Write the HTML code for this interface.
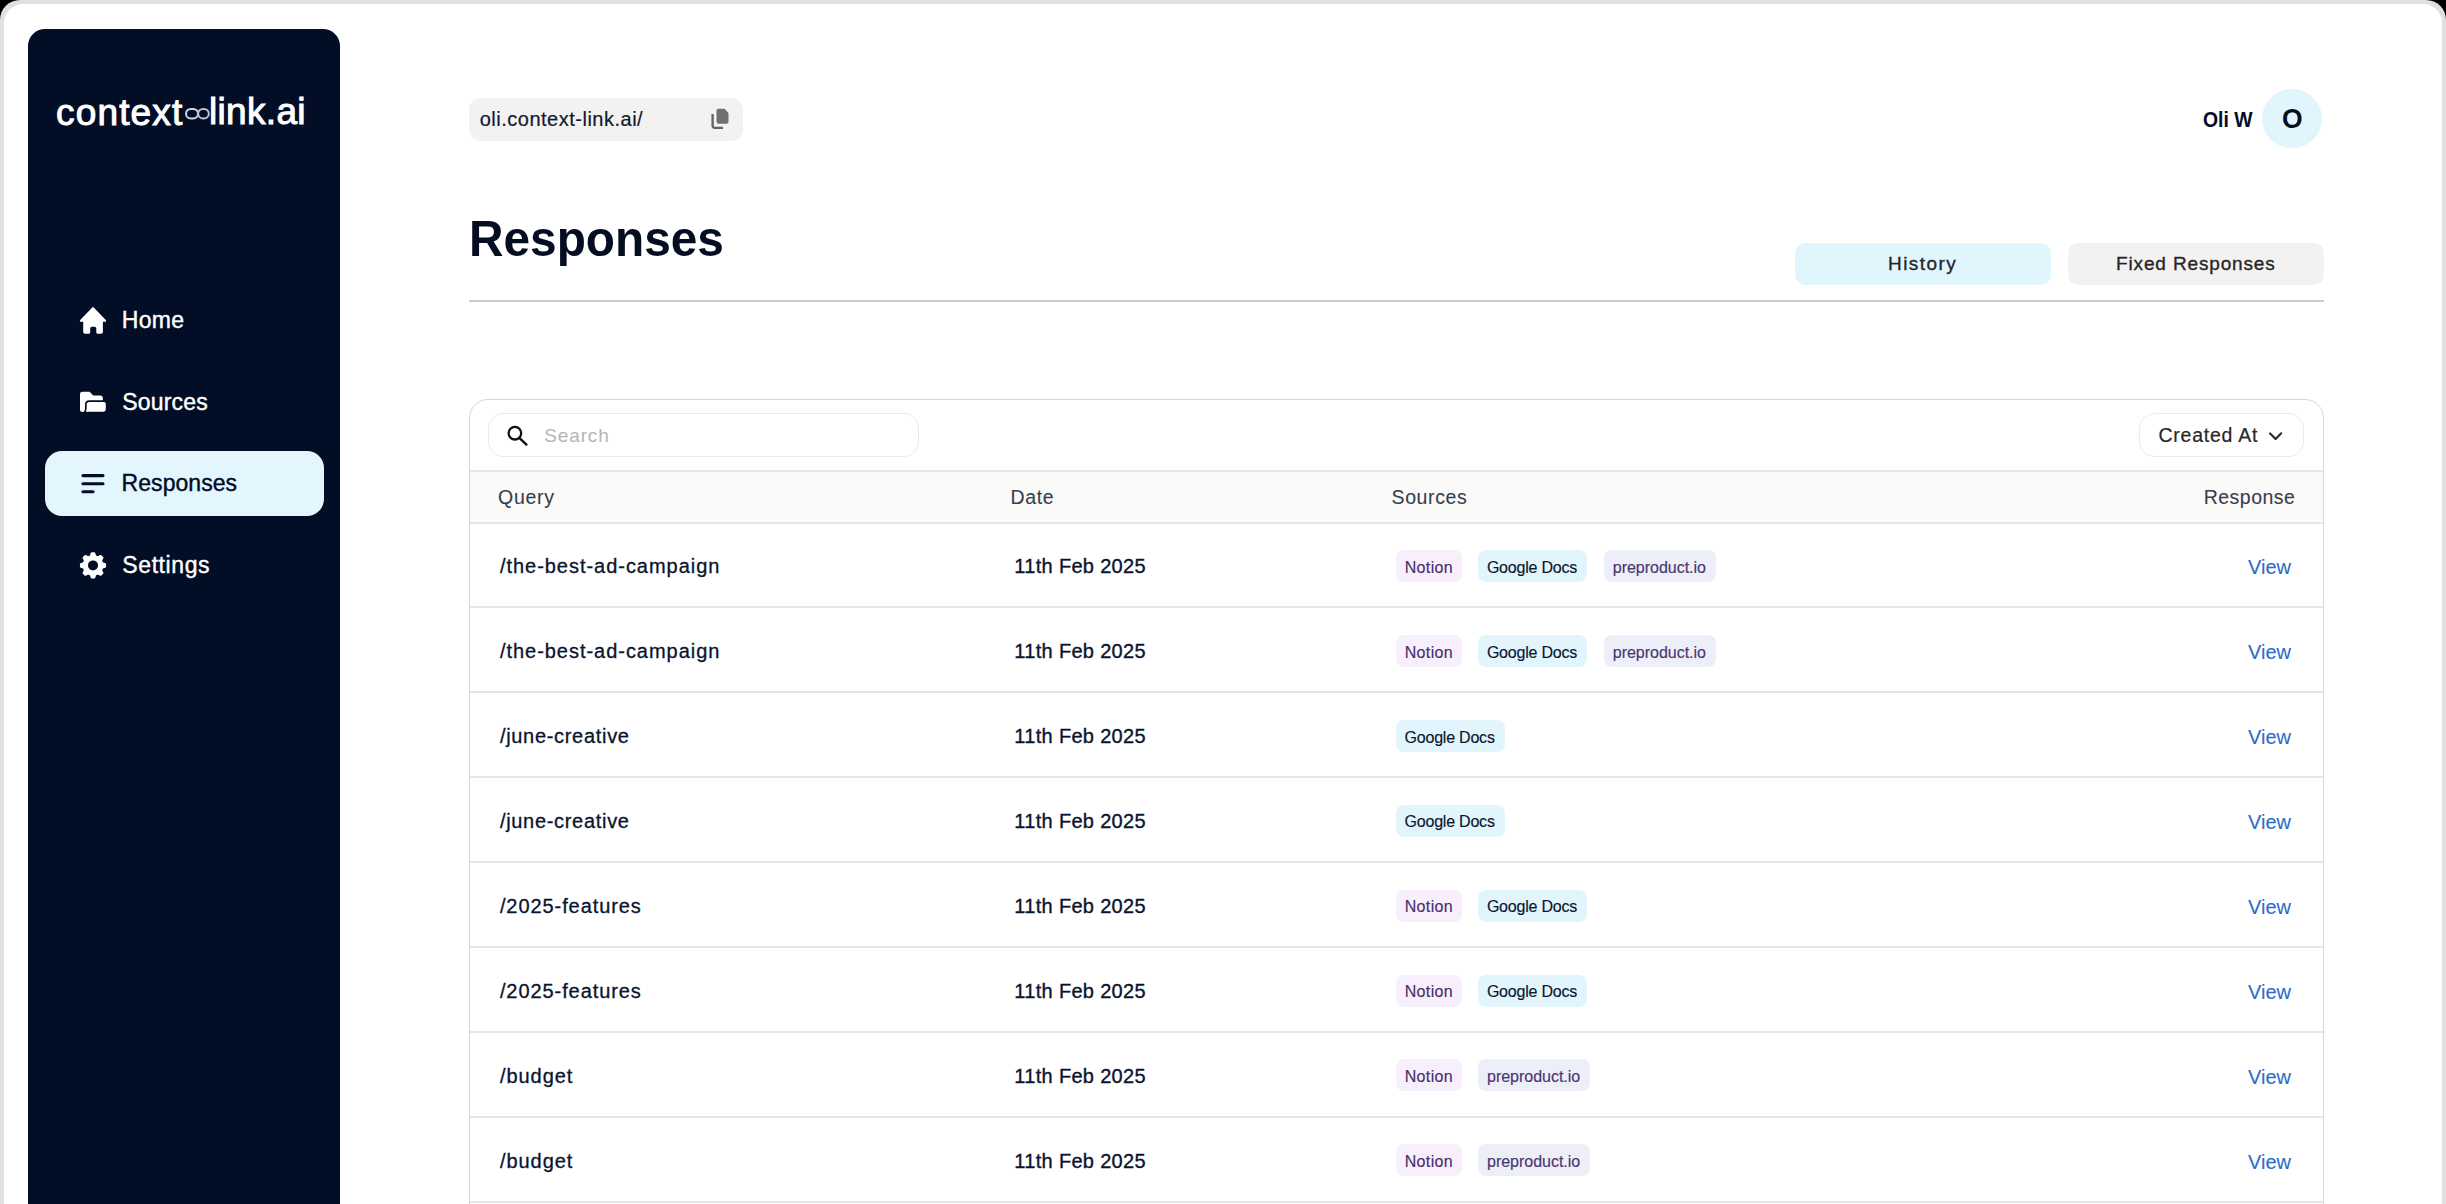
<!DOCTYPE html>
<html><head><meta charset="utf-8"><title>Responses - context-link.ai</title>
<style>
html,body{margin:0;padding:0;}
body{width:2446px;height:1204px;overflow:hidden;background:#000;position:relative;font-family:"Liberation Sans",sans-serif;}
.t{position:absolute;white-space:nowrap;font-family:"Liberation Sans",sans-serif;}
.abs{position:absolute;}
</style></head><body>
<div class="abs" style="left:0;top:0;width:2446px;height:1300px;background:#e0e0de;border-radius:20px 20px 0 0;"></div>
<div class="abs" style="left:4px;top:4px;width:2438px;height:1300px;background:#fff;border-radius:19px 19px 0 0;"></div>

<div class="abs" style="left:28px;top:29px;width:311.5px;height:1300px;background:#020d26;border-radius:17px;"></div>
<div class="t" style="left:56.00px;top:93.50px;font-size:37px;line-height:37px;font-weight:400;letter-spacing:1.167px;color:#ffffff;-webkit-text-stroke:1.0px #ffffff;">context</div>
<div class="t" style="left:209.00px;top:93.40px;font-size:37px;line-height:37px;font-weight:400;letter-spacing:0.333px;color:#ffffff;-webkit-text-stroke:1.0px #ffffff;">link.ai</div>
<svg class="abs" style="left:180px;top:100px" width="34" height="26" viewBox="180 100 34 26">
<rect x="186" y="108.9" width="12" height="9.6" rx="4.8" ry="4.8" fill="none" stroke="#cfd8e6" stroke-width="2"/>
<rect x="198.2" y="108.9" width="10.6" height="9.6" rx="4.8" ry="4.8" fill="none" stroke="#c6bfc4" stroke-width="2"/>
</svg>
<div class="abs" style="left:45px;top:451px;width:278.5px;height:65px;background:#e3f6fd;border-radius:17px;"></div>
<svg class="abs" style="left:76px;top:302px" width="34" height="36" viewBox="0 0 34 36">
<path fill="#fff" d="M17,4.7 L29.8,17.9 Q30.8,19.7 28.9,19.7 L26.9,19.7 L26.9,30 Q26.9,31.8 25,31.8 L21.9,31.8 Q20.3,31.8 20.3,30.2 L20.3,26.6 Q20.3,24.8 18.5,24.8 L16,24.8 Q14.2,24.8 14.2,26.6 L14.2,30.2 Q14.2,31.8 12.6,31.8 L9.1,31.8 Q7.2,31.8 7.2,30 L7.2,19.7 L5.1,19.7 Q3.2,19.7 4.2,17.9 Z"/>
</svg>
<svg class="abs" style="left:76px;top:386px" width="34" height="32" viewBox="0 0 34 32">
<path fill="#fff" d="M4,8.2 Q4,5.85 6.4,5.85 L13.6,5.85 L17.2,9.6 L24,9.6 Q26.9,9.6 26.9,12.5 L26.9,16 L11,16 L9.5,24.2 Q9.2,26.1 6.6,26.1 Q4,26.1 4,23.6 Z"/>
<path fill="#fff" stroke="#020d26" stroke-width="1.7" d="M13.4,15.2 L28,15.2 Q30.6,15.2 30.6,17.8 L30.6,23.6 Q30.6,26.6 27.8,26.6 L8.2,26.6 Q9.6,25.2 9.8,23 L9.8,18.6 Q9.8,15.2 13.4,15.2 Z"/>
</svg>
<svg class="abs" style="left:76px;top:466px" width="34" height="34" viewBox="76 466 34 34">
<path stroke="#020d26" stroke-width="3.1" stroke-linecap="round" fill="none" d="M83,475.6 L103,475.6 M83,483.7 L103,483.7 M83,491.8 L93,491.8"/>
</svg>
<svg class="abs" style="left:76px;top:548px" width="34" height="36" viewBox="76 548 34 36">
<path fill="#fff" fill-rule="evenodd" d="M93.00,552.30 L93.23,552.30 L93.46,552.31 L93.69,552.32 L93.91,552.33 L94.14,552.35 L94.37,552.37 L94.60,552.40 L94.81,552.50 L95.01,552.69 L95.19,552.96 L95.35,553.29 L95.49,553.67 L95.62,554.06 L95.73,554.45 L95.83,554.82 L95.94,555.14 L96.06,555.39 L96.19,555.57 L96.35,555.66 L96.52,555.72 L96.69,555.78 L96.86,555.85 L97.02,555.92 L97.19,555.99 L97.35,556.07 L97.52,556.14 L97.69,556.19 L97.91,556.16 L98.18,556.06 L98.48,555.91 L98.81,555.73 L99.17,555.53 L99.53,555.34 L99.90,555.17 L100.25,555.05 L100.56,554.99 L100.84,555.00 L101.06,555.08 L101.24,555.22 L101.42,555.36 L101.59,555.51 L101.77,555.66 L101.93,555.82 L102.10,555.98 L102.26,556.14 L102.42,556.30 L102.58,556.47 L102.74,556.63 L102.89,556.81 L103.04,556.98 L103.18,557.16 L103.32,557.34 L103.40,557.56 L103.41,557.84 L103.35,558.15 L103.23,558.50 L103.06,558.87 L102.87,559.23 L102.67,559.59 L102.49,559.92 L102.34,560.22 L102.24,560.49 L102.21,560.71 L102.26,560.88 L102.33,561.05 L102.41,561.21 L102.48,561.38 L102.55,561.54 L102.62,561.71 L102.68,561.88 L102.74,562.05 L102.83,562.21 L103.01,562.34 L103.26,562.46 L103.58,562.57 L103.95,562.67 L104.34,562.78 L104.73,562.91 L105.11,563.05 L105.44,563.21 L105.71,563.39 L105.90,563.59 L106.00,563.80 L106.03,564.03 L106.05,564.26 L106.07,564.49 L106.08,564.71 L106.09,564.94 L106.10,565.17 L106.10,565.40 L106.10,565.63 L106.09,565.86 L106.08,566.09 L106.07,566.31 L106.05,566.54 L106.03,566.77 L106.00,567.00 L105.90,567.21 L105.71,567.41 L105.44,567.59 L105.11,567.75 L104.73,567.89 L104.34,568.02 L103.95,568.13 L103.58,568.23 L103.26,568.34 L103.01,568.46 L102.83,568.59 L102.74,568.75 L102.68,568.92 L102.62,569.09 L102.55,569.26 L102.48,569.42 L102.41,569.59 L102.33,569.75 L102.26,569.92 L102.21,570.09 L102.24,570.31 L102.34,570.58 L102.49,570.88 L102.67,571.21 L102.87,571.57 L103.06,571.93 L103.23,572.30 L103.35,572.65 L103.41,572.96 L103.40,573.24 L103.32,573.46 L103.18,573.64 L103.04,573.82 L102.89,573.99 L102.74,574.17 L102.58,574.33 L102.42,574.50 L102.26,574.66 L102.10,574.82 L101.93,574.98 L101.77,575.14 L101.59,575.29 L101.42,575.44 L101.24,575.58 L101.06,575.72 L100.84,575.80 L100.56,575.81 L100.25,575.75 L99.90,575.63 L99.53,575.46 L99.17,575.27 L98.81,575.07 L98.48,574.89 L98.18,574.74 L97.91,574.64 L97.69,574.61 L97.52,574.66 L97.35,574.73 L97.19,574.81 L97.02,574.88 L96.86,574.95 L96.69,575.02 L96.52,575.08 L96.35,575.14 L96.19,575.23 L96.06,575.41 L95.94,575.66 L95.83,575.98 L95.73,576.35 L95.62,576.74 L95.49,577.13 L95.35,577.51 L95.19,577.84 L95.01,578.11 L94.81,578.30 L94.60,578.40 L94.37,578.43 L94.14,578.45 L93.91,578.47 L93.69,578.48 L93.46,578.49 L93.23,578.50 L93.00,578.50 L92.77,578.50 L92.54,578.49 L92.31,578.48 L92.09,578.47 L91.86,578.45 L91.63,578.43 L91.40,578.40 L91.19,578.30 L90.99,578.11 L90.81,577.84 L90.65,577.51 L90.51,577.13 L90.38,576.74 L90.27,576.35 L90.17,575.98 L90.06,575.66 L89.94,575.41 L89.81,575.23 L89.65,575.14 L89.48,575.08 L89.31,575.02 L89.14,574.95 L88.98,574.88 L88.81,574.81 L88.65,574.73 L88.48,574.66 L88.31,574.61 L88.09,574.64 L87.82,574.74 L87.52,574.89 L87.19,575.07 L86.83,575.27 L86.47,575.46 L86.10,575.63 L85.75,575.75 L85.44,575.81 L85.16,575.80 L84.94,575.72 L84.76,575.58 L84.58,575.44 L84.41,575.29 L84.23,575.14 L84.07,574.98 L83.90,574.82 L83.74,574.66 L83.58,574.50 L83.42,574.33 L83.26,574.17 L83.11,573.99 L82.96,573.82 L82.82,573.64 L82.68,573.46 L82.60,573.24 L82.59,572.96 L82.65,572.65 L82.77,572.30 L82.94,571.93 L83.13,571.57 L83.33,571.21 L83.51,570.88 L83.66,570.58 L83.76,570.31 L83.79,570.09 L83.74,569.92 L83.67,569.75 L83.59,569.59 L83.52,569.42 L83.45,569.26 L83.38,569.09 L83.32,568.92 L83.26,568.75 L83.17,568.59 L82.99,568.46 L82.74,568.34 L82.42,568.23 L82.05,568.13 L81.66,568.02 L81.27,567.89 L80.89,567.75 L80.56,567.59 L80.29,567.41 L80.10,567.21 L80.00,567.00 L79.97,566.77 L79.95,566.54 L79.93,566.31 L79.92,566.09 L79.91,565.86 L79.90,565.63 L79.90,565.40 L79.90,565.17 L79.91,564.94 L79.92,564.71 L79.93,564.49 L79.95,564.26 L79.97,564.03 L80.00,563.80 L80.10,563.59 L80.29,563.39 L80.56,563.21 L80.89,563.05 L81.27,562.91 L81.66,562.78 L82.05,562.67 L82.42,562.57 L82.74,562.46 L82.99,562.34 L83.17,562.21 L83.26,562.05 L83.32,561.88 L83.38,561.71 L83.45,561.54 L83.52,561.38 L83.59,561.21 L83.67,561.05 L83.74,560.88 L83.79,560.71 L83.76,560.49 L83.66,560.22 L83.51,559.92 L83.33,559.59 L83.13,559.23 L82.94,558.87 L82.77,558.50 L82.65,558.15 L82.59,557.84 L82.60,557.56 L82.68,557.34 L82.82,557.16 L82.96,556.98 L83.11,556.81 L83.26,556.63 L83.42,556.47 L83.58,556.30 L83.74,556.14 L83.90,555.98 L84.07,555.82 L84.23,555.66 L84.41,555.51 L84.58,555.36 L84.76,555.22 L84.94,555.08 L85.16,555.00 L85.44,554.99 L85.75,555.05 L86.10,555.17 L86.47,555.34 L86.83,555.53 L87.19,555.73 L87.52,555.91 L87.82,556.06 L88.09,556.16 L88.31,556.19 L88.48,556.14 L88.65,556.07 L88.81,555.99 L88.98,555.92 L89.14,555.85 L89.31,555.78 L89.48,555.72 L89.65,555.66 L89.81,555.57 L89.94,555.39 L90.06,555.14 L90.17,554.82 L90.27,554.45 L90.38,554.06 L90.51,553.67 L90.65,553.29 L90.81,552.96 L90.99,552.69 L91.19,552.50 L91.40,552.40 L91.63,552.37 L91.86,552.35 L92.09,552.33 L92.31,552.32 L92.54,552.31 L92.77,552.30Z M98.00,565.40 A5.0,5.0 0 1,0 88.00,565.40 A5.0,5.0 0 1,0 98.00,565.40Z"/>
</svg>
<div class="t" style="left:121.70px;top:309.00px;font-size:23px;line-height:23px;font-weight:400;letter-spacing:0.333px;color:#ffffff;-webkit-text-stroke:0.4px #ffffff;">Home</div>
<div class="t" style="left:122.30px;top:391.00px;font-size:23px;line-height:23px;font-weight:400;letter-spacing:0.167px;color:#ffffff;-webkit-text-stroke:0.4px #ffffff;">Sources</div>
<div class="t" style="left:121.60px;top:472.20px;font-size:23px;line-height:23px;font-weight:400;letter-spacing:0.05px;color:#020c26;-webkit-text-stroke:0.4px #020c26;">Responses</div>
<div class="t" style="left:122.30px;top:554.10px;font-size:23px;line-height:23px;font-weight:400;letter-spacing:0.6px;color:#ffffff;-webkit-text-stroke:0.4px #ffffff;">Settings</div>
<div class="abs" style="left:469px;top:97.5px;width:274px;height:43px;background:#f3f2f1;border-radius:12px;"></div>
<div class="t" style="left:479.70px;top:108.90px;font-size:20px;line-height:20px;font-weight:400;letter-spacing:0.505px;color:#0f1a33;-webkit-text-stroke:0.2px #0f1a33;">oli.context-link.ai/</div>
<svg class="abs" style="left:704px;top:102px" width="32" height="32" viewBox="0 0 32 32">
<path fill="#6f7171" d="M14.5,6.8 L20.6,6.8 L24.5,11 L24.5,19.8 Q24.5,21.8 22.5,21.8 L14.5,21.8 Q12.5,21.8 12.5,19.8 L12.5,8.8 Q12.5,6.8 14.5,6.8 Z"/>
<path fill="none" stroke="#5f6363" stroke-width="2.3" stroke-linejoin="round" d="M8.6,11.9 L8.6,23.6 Q8.6,25.8 10.8,25.8 L19.1,25.8"/>
</svg>
<div class="t" style="left:2202.70px;top:109.50px;font-size:21.5px;line-height:21.5px;font-weight:700;letter-spacing:0px;color:#050d22;transform:scaleX(0.9);transform-origin:0 0;">Oli W</div>
<div class="abs" style="left:2262px;top:88.8px;width:59.6px;height:59.6px;background:#e2f5fd;border-radius:50%;"></div>
<div class="t" style="left:2281.94px;top:104.60px;font-size:27.5px;line-height:27.5px;font-weight:700;letter-spacing:0px;color:#050d22;transform:scaleX(0.9632);transform-origin:0 0;">O</div>
<div class="t" style="left:469.10px;top:214.20px;font-size:49.5px;line-height:49.5px;font-weight:700;letter-spacing:0px;color:#050d22;transform:scaleX(0.9653);transform-origin:0 0;">Responses</div>
<div class="abs" style="left:1795px;top:243px;width:256px;height:42px;background:#e1f5fd;border-radius:10px;"></div>
<div class="abs" style="left:2068px;top:243px;width:256px;height:42px;background:#f3f2f1;border-radius:10px;"></div>
<div class="t" style="left:1888.00px;top:254.40px;font-size:19px;line-height:19px;font-weight:400;letter-spacing:1.434px;color:#262626;-webkit-text-stroke:0.35px #262626;">History</div>
<div class="t" style="left:2116.00px;top:254.40px;font-size:19px;line-height:19px;font-weight:400;letter-spacing:0.857px;color:#262626;-webkit-text-stroke:0.35px #262626;">Fixed Responses</div>
<div class="abs" style="left:469px;top:299.6px;width:1855px;height:2px;background:#cdcdcd;"></div>
<div class="abs" style="left:468.7px;top:399.4px;width:1853px;height:1000px;border:1.8px solid #d8d8d8;border-radius:19px;"></div>
<div class="abs" style="left:488.2px;top:412.8px;width:428.6px;height:42.6px;border:1.7px solid #ebebeb;border-radius:15px;"></div>
<svg class="abs" style="left:500px;top:420px" width="32" height="32" viewBox="500 420 32 32">
<circle cx="514.9" cy="433.2" r="6.3" fill="none" stroke="#111" stroke-width="2.3"/>
<path d="M519.6,438.1 L526.4,444.6" stroke="#111" stroke-width="2.4" stroke-linecap="round"/>
</svg>
<div class="t" style="left:544.20px;top:426.00px;font-size:19px;line-height:19px;font-weight:400;letter-spacing:0.88px;color:#b4b4b4;">Search</div>
<div class="abs" style="left:2138.5px;top:412.8px;width:163.6px;height:42.6px;border:1.7px solid #ebebeb;border-radius:15px;"></div>
<div class="t" style="left:2158.50px;top:425.80px;font-size:19.5px;line-height:19.5px;font-weight:400;letter-spacing:0.755px;color:#262626;-webkit-text-stroke:0.2px #262626;">Created At</div>
<svg class="abs" style="left:2262px;top:422px" width="28" height="28" viewBox="2262 422 28 28">
<path d="M2270.1,433.4 L2275.6,438.9 L2281.2,433.3" fill="none" stroke="#262626" stroke-width="2.1" stroke-linecap="round" stroke-linejoin="round"/>
</svg>
<div class="abs" style="left:470px;top:469.5px;width:1853px;height:2px;background:#e6e6e6;"></div>
<div class="abs" style="left:470px;top:471.5px;width:1853px;height:50px;background:#fafaf9;"></div>
<div class="abs" style="left:470px;top:521.5px;width:1853px;height:2px;background:#e6e6e6;"></div>
<div class="t" style="left:498.00px;top:488.30px;font-size:19.5px;line-height:19.5px;font-weight:400;letter-spacing:0.75px;color:#363e4f;-webkit-text-stroke:0.1px #363e4f;">Query</div>
<div class="t" style="left:1010.50px;top:488.10px;font-size:19.5px;line-height:19.5px;font-weight:400;letter-spacing:0.666px;color:#363e4f;-webkit-text-stroke:0.1px #363e4f;">Date</div>
<div class="t" style="left:1391.50px;top:488.00px;font-size:19.5px;line-height:19.5px;font-weight:400;letter-spacing:0.633px;color:#363e4f;-webkit-text-stroke:0.1px #363e4f;">Sources</div>
<div class="t" style="left:2203.70px;top:488.20px;font-size:19.5px;line-height:19.5px;font-weight:400;letter-spacing:0.486px;color:#363e4f;-webkit-text-stroke:0.1px #363e4f;">Response</div>
<div class="t" style="left:499.90px;top:555.50px;font-size:20px;line-height:20px;font-weight:400;letter-spacing:0.97px;color:#0a142e;-webkit-text-stroke:0.3px #0a142e;">/the-best-ad-campaign</div>
<div class="t" style="left:1014.30px;top:556.40px;font-size:20px;line-height:20px;font-weight:400;letter-spacing:0.317px;color:#0a142e;-webkit-text-stroke:0.35px #0a142e;">11th Feb 2025</div>
<div class="t" style="left:2248.00px;top:556.50px;font-size:20px;line-height:20px;font-weight:400;letter-spacing:0.0px;color:#2d6ccb;-webkit-text-stroke:0.1px #2d6ccb;">View</div>
<div class="abs" style="left:470px;top:606.40px;width:1853px;height:2px;background:#e6e6e6;"></div>
<div class="abs" style="left:1395.60px;top:550.00px;width:66px;height:32px;background:#f7effc;border-radius:8px;"></div>
<div class="t" style="left:1404.70px;top:559.70px;font-size:16px;line-height:16px;letter-spacing:0.36px;color:#4a2e6a;-webkit-text-stroke:0.15px #4a2e6a;">Notion</div>
<div class="abs" style="left:1477.90px;top:550.00px;width:109.5px;height:32px;background:#e2f5fc;border-radius:8px;"></div>
<div class="t" style="left:1486.90px;top:559.70px;font-size:16px;line-height:16px;letter-spacing:-0.22px;color:#0b1530;-webkit-text-stroke:0.15px #0b1530;">Google Docs</div>
<div class="abs" style="left:1603.70px;top:550.00px;width:112.6px;height:32px;background:#eceef8;border-radius:8px;"></div>
<div class="t" style="left:1612.80px;top:559.70px;font-size:16px;line-height:16px;letter-spacing:-0.017px;color:#4b3670;-webkit-text-stroke:0.15px #4b3670;">preproduct.io</div>
<div class="t" style="left:499.90px;top:640.50px;font-size:20px;line-height:20px;font-weight:400;letter-spacing:0.97px;color:#0a142e;-webkit-text-stroke:0.3px #0a142e;">/the-best-ad-campaign</div>
<div class="t" style="left:1014.30px;top:641.40px;font-size:20px;line-height:20px;font-weight:400;letter-spacing:0.317px;color:#0a142e;-webkit-text-stroke:0.35px #0a142e;">11th Feb 2025</div>
<div class="t" style="left:2248.00px;top:641.50px;font-size:20px;line-height:20px;font-weight:400;letter-spacing:0.0px;color:#2d6ccb;-webkit-text-stroke:0.1px #2d6ccb;">View</div>
<div class="abs" style="left:470px;top:691.30px;width:1853px;height:2px;background:#e6e6e6;"></div>
<div class="abs" style="left:1395.60px;top:634.90px;width:66px;height:32px;background:#f7effc;border-radius:8px;"></div>
<div class="t" style="left:1404.70px;top:644.60px;font-size:16px;line-height:16px;letter-spacing:0.36px;color:#4a2e6a;-webkit-text-stroke:0.15px #4a2e6a;">Notion</div>
<div class="abs" style="left:1477.90px;top:634.90px;width:109.5px;height:32px;background:#e2f5fc;border-radius:8px;"></div>
<div class="t" style="left:1486.90px;top:644.60px;font-size:16px;line-height:16px;letter-spacing:-0.22px;color:#0b1530;-webkit-text-stroke:0.15px #0b1530;">Google Docs</div>
<div class="abs" style="left:1603.70px;top:634.90px;width:112.6px;height:32px;background:#eceef8;border-radius:8px;"></div>
<div class="t" style="left:1612.80px;top:644.60px;font-size:16px;line-height:16px;letter-spacing:-0.017px;color:#4b3670;-webkit-text-stroke:0.15px #4b3670;">preproduct.io</div>
<div class="t" style="left:499.90px;top:725.50px;font-size:20px;line-height:20px;font-weight:400;letter-spacing:0.692px;color:#0a142e;-webkit-text-stroke:0.3px #0a142e;">/june-creative</div>
<div class="t" style="left:1014.30px;top:726.40px;font-size:20px;line-height:20px;font-weight:400;letter-spacing:0.317px;color:#0a142e;-webkit-text-stroke:0.35px #0a142e;">11th Feb 2025</div>
<div class="t" style="left:2248.00px;top:726.50px;font-size:20px;line-height:20px;font-weight:400;letter-spacing:0.0px;color:#2d6ccb;-webkit-text-stroke:0.1px #2d6ccb;">View</div>
<div class="abs" style="left:470px;top:776.20px;width:1853px;height:2px;background:#e6e6e6;"></div>
<div class="abs" style="left:1395.60px;top:719.80px;width:109.5px;height:32px;background:#e2f5fc;border-radius:8px;"></div>
<div class="t" style="left:1404.60px;top:729.50px;font-size:16px;line-height:16px;letter-spacing:-0.22px;color:#0b1530;-webkit-text-stroke:0.15px #0b1530;">Google Docs</div>
<div class="t" style="left:499.90px;top:810.50px;font-size:20px;line-height:20px;font-weight:400;letter-spacing:0.692px;color:#0a142e;-webkit-text-stroke:0.3px #0a142e;">/june-creative</div>
<div class="t" style="left:1014.30px;top:811.40px;font-size:20px;line-height:20px;font-weight:400;letter-spacing:0.317px;color:#0a142e;-webkit-text-stroke:0.35px #0a142e;">11th Feb 2025</div>
<div class="t" style="left:2248.00px;top:811.50px;font-size:20px;line-height:20px;font-weight:400;letter-spacing:0.0px;color:#2d6ccb;-webkit-text-stroke:0.1px #2d6ccb;">View</div>
<div class="abs" style="left:470px;top:861.10px;width:1853px;height:2px;background:#e6e6e6;"></div>
<div class="abs" style="left:1395.60px;top:804.70px;width:109.5px;height:32px;background:#e2f5fc;border-radius:8px;"></div>
<div class="t" style="left:1404.60px;top:814.40px;font-size:16px;line-height:16px;letter-spacing:-0.22px;color:#0b1530;-webkit-text-stroke:0.15px #0b1530;">Google Docs</div>
<div class="t" style="left:499.90px;top:895.50px;font-size:20px;line-height:20px;font-weight:400;letter-spacing:0.923px;color:#0a142e;-webkit-text-stroke:0.3px #0a142e;">/2025-features</div>
<div class="t" style="left:1014.30px;top:896.40px;font-size:20px;line-height:20px;font-weight:400;letter-spacing:0.317px;color:#0a142e;-webkit-text-stroke:0.35px #0a142e;">11th Feb 2025</div>
<div class="t" style="left:2248.00px;top:896.50px;font-size:20px;line-height:20px;font-weight:400;letter-spacing:0.0px;color:#2d6ccb;-webkit-text-stroke:0.1px #2d6ccb;">View</div>
<div class="abs" style="left:470px;top:946.00px;width:1853px;height:2px;background:#e6e6e6;"></div>
<div class="abs" style="left:1395.60px;top:889.60px;width:66px;height:32px;background:#f7effc;border-radius:8px;"></div>
<div class="t" style="left:1404.70px;top:899.30px;font-size:16px;line-height:16px;letter-spacing:0.36px;color:#4a2e6a;-webkit-text-stroke:0.15px #4a2e6a;">Notion</div>
<div class="abs" style="left:1477.90px;top:889.60px;width:109.5px;height:32px;background:#e2f5fc;border-radius:8px;"></div>
<div class="t" style="left:1486.90px;top:899.30px;font-size:16px;line-height:16px;letter-spacing:-0.22px;color:#0b1530;-webkit-text-stroke:0.15px #0b1530;">Google Docs</div>
<div class="t" style="left:499.90px;top:980.50px;font-size:20px;line-height:20px;font-weight:400;letter-spacing:0.923px;color:#0a142e;-webkit-text-stroke:0.3px #0a142e;">/2025-features</div>
<div class="t" style="left:1014.30px;top:981.40px;font-size:20px;line-height:20px;font-weight:400;letter-spacing:0.317px;color:#0a142e;-webkit-text-stroke:0.35px #0a142e;">11th Feb 2025</div>
<div class="t" style="left:2248.00px;top:981.50px;font-size:20px;line-height:20px;font-weight:400;letter-spacing:0.0px;color:#2d6ccb;-webkit-text-stroke:0.1px #2d6ccb;">View</div>
<div class="abs" style="left:470px;top:1030.90px;width:1853px;height:2px;background:#e6e6e6;"></div>
<div class="abs" style="left:1395.60px;top:974.50px;width:66px;height:32px;background:#f7effc;border-radius:8px;"></div>
<div class="t" style="left:1404.70px;top:984.20px;font-size:16px;line-height:16px;letter-spacing:0.36px;color:#4a2e6a;-webkit-text-stroke:0.15px #4a2e6a;">Notion</div>
<div class="abs" style="left:1477.90px;top:974.50px;width:109.5px;height:32px;background:#e2f5fc;border-radius:8px;"></div>
<div class="t" style="left:1486.90px;top:984.20px;font-size:16px;line-height:16px;letter-spacing:-0.22px;color:#0b1530;-webkit-text-stroke:0.15px #0b1530;">Google Docs</div>
<div class="t" style="left:499.90px;top:1065.50px;font-size:20px;line-height:20px;font-weight:400;letter-spacing:0.967px;color:#0a142e;-webkit-text-stroke:0.3px #0a142e;">/budget</div>
<div class="t" style="left:1014.30px;top:1066.40px;font-size:20px;line-height:20px;font-weight:400;letter-spacing:0.317px;color:#0a142e;-webkit-text-stroke:0.35px #0a142e;">11th Feb 2025</div>
<div class="t" style="left:2248.00px;top:1066.50px;font-size:20px;line-height:20px;font-weight:400;letter-spacing:0.0px;color:#2d6ccb;-webkit-text-stroke:0.1px #2d6ccb;">View</div>
<div class="abs" style="left:470px;top:1115.80px;width:1853px;height:2px;background:#e6e6e6;"></div>
<div class="abs" style="left:1395.60px;top:1059.40px;width:66px;height:32px;background:#f7effc;border-radius:8px;"></div>
<div class="t" style="left:1404.70px;top:1069.10px;font-size:16px;line-height:16px;letter-spacing:0.36px;color:#4a2e6a;-webkit-text-stroke:0.15px #4a2e6a;">Notion</div>
<div class="abs" style="left:1477.90px;top:1059.40px;width:112.6px;height:32px;background:#eceef8;border-radius:8px;"></div>
<div class="t" style="left:1487.00px;top:1069.10px;font-size:16px;line-height:16px;letter-spacing:-0.017px;color:#4b3670;-webkit-text-stroke:0.15px #4b3670;">preproduct.io</div>
<div class="t" style="left:499.90px;top:1150.50px;font-size:20px;line-height:20px;font-weight:400;letter-spacing:0.967px;color:#0a142e;-webkit-text-stroke:0.3px #0a142e;">/budget</div>
<div class="t" style="left:1014.30px;top:1151.40px;font-size:20px;line-height:20px;font-weight:400;letter-spacing:0.317px;color:#0a142e;-webkit-text-stroke:0.35px #0a142e;">11th Feb 2025</div>
<div class="t" style="left:2248.00px;top:1151.50px;font-size:20px;line-height:20px;font-weight:400;letter-spacing:0.0px;color:#2d6ccb;-webkit-text-stroke:0.1px #2d6ccb;">View</div>
<div class="abs" style="left:470px;top:1200.70px;width:1853px;height:2px;background:#e6e6e6;"></div>
<div class="abs" style="left:1395.60px;top:1144.30px;width:66px;height:32px;background:#f7effc;border-radius:8px;"></div>
<div class="t" style="left:1404.70px;top:1154.00px;font-size:16px;line-height:16px;letter-spacing:0.36px;color:#4a2e6a;-webkit-text-stroke:0.15px #4a2e6a;">Notion</div>
<div class="abs" style="left:1477.90px;top:1144.30px;width:112.6px;height:32px;background:#eceef8;border-radius:8px;"></div>
<div class="t" style="left:1487.00px;top:1154.00px;font-size:16px;line-height:16px;letter-spacing:-0.017px;color:#4b3670;-webkit-text-stroke:0.15px #4b3670;">preproduct.io</div>
</body></html>
